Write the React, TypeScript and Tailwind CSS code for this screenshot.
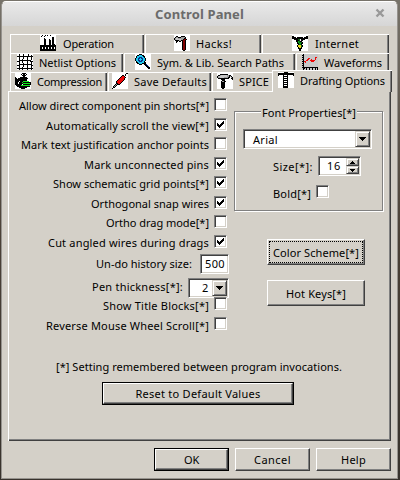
import React, { useLayoutEffect, useRef, type ReactNode } from "react";

/** A line of text whose letter spacing is adjusted so that it fills `w` pixels. */
function Fit({ w, children, className = "" }: { w: number; children: string; className?: string }) {
  const ref = useRef<HTMLSpanElement>(null);
  useLayoutEffect(() => {
    const el = ref.current;
    if (!el) return;
    el.style.letterSpacing = "0px";
    const natural = el.getBoundingClientRect().width;
    el.style.letterSpacing = `${(w - natural) / children.length}px`;
  }, [w, children]);
  return (
    <span ref={ref} className={`inline-block shrink-0 whitespace-nowrap leading-[15px] ${className}`}>
      {children}
    </span>
  );
}

const palette: Record<string, string> = {
  "#": "#000000", ".": "#ffffff", g: "#00b818", y: "#e8e020", r: "#f00808",
  d: "#800000", c: "#20c8f0", b: "#083088", s: "#a0a0a0", l: "#c8c8c8", t: "#d4d0c8",
  k: "#106018", G: "#10e818",
};

/** 16x16 pixel icon, one character for each pixel. */
function Pixels({ rows }: { rows: string[] }) {
  return (
    <svg width="16" height="16" viewBox="0 0 16 16" shapeRendering="crispEdges" className="block shrink-0">
      {rows.flatMap((row, y) =>
        [...row].map((c, x) =>
          palette[c] ? <rect key={`${x}-${y}`} x={x} y={y} width="1" height="1" fill={palette[c]} /> : null,
        ),
      )}
    </svg>
  );
}

const factory = [
  "..#..#.#..#.....", ".#..#...........", "............##..", "....#.......##..",
  "....##...#..##..", "....##...##.##..", "....##...##.##..", "....##...##.##..",
  "....##...##.##..", "....##...##.###.", "################", "################",
  "##.##.##.##.##.#", "##.##.##.##.##.#", "################", "################",
];
const hammer = [
  "................", "..##...####.....", ".#ss###ssss#....", "#sllssssss##....",
  "#slllllss#dd#...", ".####ss##dd#....", "..##.##.#dd#....", "..#.....#dd#....",
  "........#dd#....", "........#dd#....", "........#dd#....", "........#dd#....",
  "........#dd#....", "........#dd#....", "........#dd#....", ".........##.....",
];
const network = [
  "................", "##............##", "####.######.####", "################",
  "..####kk.####...", "....###k.##.....", "....##gk##......", ".....#gkkk#.....",
  ".....##gg##.....", "......#kk#......", ".....#yyyk#.....", ".....#yyyk#.....",
  "......#yy#......", "......####......", ".......##.......", ".......##.......",
];
const grid = [
  "..#...#....#....", "..#...#....#..#.", "################", "..#...#...#...#.",
  "..#...#...#...#.", "..#..#....#...#.", "..############..", "###..#....#..###",
  "..#..#....#...#.", "..#...#...#...#.", "..#############.", "###...#...#...##",
  "..#...#...#...#.", "..#..#....#...#.", "################", "..#..#....#...#.",
];
const magnifier = [
  "....###.........", "..##ccc##.......", ".#cccccc##......", ".#ccbbbcc#......",
  "#ccbbcbbcc#.....", "#ccbcccbcc#.....", "#ccbbcbbcc#.....", ".#ccbbbcc#......",
  ".##cccccc##.....", "..##ccc####.....", "....###..##b....", "..........##b...",
  "...........##b..", "............###.", ".............##.", "................",
];
const waveform = [
  "t#llllllllllllll", "##llllllllllllll", "l#llllllllllllll", "##lllllllllllrrl",
  "l#llllrrlllllrll", "##lllrrllrlllrll", "l#llrrllrrrrrlll", "##rrlllllrrrllll",
  "l#lrllllllllllll", "##llllllllllllll", "l#llllllllllllll", "##llllllllllllll",
  "l#llllllllllllll", "################", "l##l#ll#ll#ll#l#", "l#ll#ll#ll#ll#l#",
];
const clamp = [
  ".......####.....", "......#.##.#....", ".......####.....", "........##......",
  "#....#######....", "##.##########...", "############....", "############....",
  "####.###GGGGGG..", "###.###G########", "###.####GGGGGGG#", "#######.########",
  ".#####GGGGGGGGG.", "..#############.", "....########....", "......####......",
];
const pen = [
  "..............##", ".............#..", "..........##.#..", ".........#rr#...",
  "........#rrrr#..", ".......#rrrr#...", "......#rrrrr#...", ".....#rrrrr#....",
  "....#rrrrr#.....", "....#rrrr#......", "....##rr#.......", "...#s###........",
  "..#s#...........", ".#s#............", ".##.............", "#...............",
];
const mallet = [
  "................", "...########.....", ".##sllllllss##..", "#sllllllllss#s#.",
  "#ssllllssss##.s#", ".###########..##", "....####.......#", ".....###........",
  "....#ss##.......", "....####........", "....####........", "....####........",
  "....####........", "....####........", "....####........", ".....##.........",
];
const tSquare = [
  "......####......", "################", "################", "#....#...#.....#",
  ".....#####......", ".....#...#......", ".....#####......", ".....#...#......",
  ".....#####......", ".....#...#......", ".....#####......", ".....#...#......",
  ".....#####......", ".....#...#......", ".....#####......", ".....#####......",
];

function Tab({ className, iconClass, icon, textClass, w, children }: {
  className: string; iconClass: string; icon: string[]; textClass: string; w: number; children: string;
}) {
  return (
    <div className={`flex shrink-0 items-start border-t border-l border-white ${className}`}>
      <div className={iconClass}><Pixels rows={icon} /></div>
      <Fit w={w} className={textClass}>{children}</Fit>
    </div>
  );
}

const edge = "shadow-[inset_-1px_0_#404040,inset_-2px_0_#808080]";

function Check({ on = false }: { on?: boolean }) {
  return (
    <span className="block size-[13px] shrink-0 border border-t-[#808080] border-l-[#808080] border-r-white border-b-white bg-white shadow-[inset_1px_1px_#404040,inset_-1px_-1px_#d4d0c8]">
      {on && (
        <svg width="11" height="11" viewBox="0 0 11 11" shapeRendering="crispEdges" className="block">
          <path d="M2 4h1v1h1v1h1v-1h1v-1h1v-1h1v-1h1v3h-1v1h-1v1h-1v1h-1v1h-1v-1h-1v-1h-1z" fill="#000" />
        </svg>
      )}
    </span>
  );
}

function Row({ h, w, label, on, textClass }: { h: string; w: number; label: string; on?: boolean; textClass?: string }) {
  return (
    <div className={`flex items-start justify-end gap-[5px] pr-px ${h}`}>
      <Fit w={w} className={textClass}>{label}</Fit>
      <Check on={on} />
    </div>
  );
}

const sunken =
  "border border-t-[#808080] border-l-[#808080] border-r-white border-b-white bg-white shadow-[inset_1px_1px_#404040,inset_-1px_-1px_#d4d0c8]";
const raised =
  "border border-t-[#d4d0c8] border-l-[#d4d0c8] border-r-[#404040] border-b-[#404040] bg-[#d4d0c8] shadow-[inset_1px_1px_#fff,inset_-1px_-1px_#808080]";

function ArrowDown({ small = false }: { small?: boolean }) {
  return small ? (
    <svg width="5" height="3" viewBox="0 0 5 3" shapeRendering="crispEdges"><path d="M0 0h5v1h-1v1h-1v1h-1v-1h-1v-1h-1z" /></svg>
  ) : (
    <svg width="7" height="4" viewBox="0 0 7 4" shapeRendering="crispEdges"><path d="M0 0h7v1h-1v1h-1v1h-1v1h-1v-1h-1v-1h-1v-1h-1z" /></svg>
  );
}

function Button({ className, children }: { className: string; children: ReactNode }) {
  return (
    <button
      className={`flex shrink-0 items-center justify-center border border-t-white border-l-white border-r-[#404040] border-b-[#404040] bg-[#d4d0c8] shadow-[inset_-1px_-1px_#808080] ${className}`}
    >
      {children}
    </button>
  );
}

export default function App() {
  return (
    <div className="h-[480px] w-[400px] overflow-hidden bg-linear-to-b from-[#77736a] via-[#4a4036] to-[#38332d] pt-px pl-px font-['Noto_Sans','Open_Sans',sans-serif] text-[11px] text-black">
      <div className="flex h-[478px] w-[397px] flex-col overflow-hidden rounded-t-[5px] border border-[#96938e] border-t-white bg-[#d4d0c8]">
        <header className="flex h-[24px] shrink-0 items-start rounded-t-[4px] bg-linear-to-b from-[#e9e9e9] to-[#d6d6d6] pt-[5px] pl-[153px]">
          <Fit w={89} className="font-bold text-[13px] text-[#6b6b6b]">Control Panel</Fit>
          <svg width="10" height="10" viewBox="0 0 10 10" className="mt-px ml-[131px] shrink-0">
            <path d="M1.5 1.5 8.5 8.5M8.5 1.5 1.5 8.5" stroke="#999" strokeWidth="2.4" />
          </svg>
        </header>

        <nav className="mt-[8px] shrink-0 pl-[8px]">
          <div className="flex h-[19px]">
            <Tab className={`w-[134px] ${edge}`} iconClass="pl-[29px]" icon={factory} textClass="ml-[7px] mt-[1px]" w={51}>Operation</Tab>
            <Tab className={`ml-px w-[116px] ${edge}`} iconClass="pl-[28px]" icon={hammer} textClass="ml-[6px] mt-[1px]" w={36}>Hacks!</Tab>
            <Tab className={`ml-px w-[127px] ${edge}`} iconClass="pl-[29px]" icon={network} textClass="ml-[7px] mt-[1px]" w={44}>Internet</Tab>
          </div>
          <div className="flex h-[19px]">
            <Tab className={`w-[113px] ${edge}`} iconClass="pl-[6px]" icon={grid} textClass="ml-[6px] mt-[1px]" w={77}>Netlist Options</Tab>
            <Tab className={`ml-px w-[171px] ${edge}`} iconClass="pl-[10px]" icon={magnifier} textClass="ml-[6px] mt-[1px]" w={127}>Sym. & Lib. Search Paths</Tab>
            <Tab className={`ml-px w-[93px] ${edge}`} iconClass="pl-[5px]" icon={waveform} textClass="ml-[6px] mt-[1px]" w={58}>Waveforms</Tab>
          </div>
          <div className="flex h-[19px]">
            <Tab className={`w-[97px] ${edge}`} iconClass="pl-[4px]" icon={clamp} textClass="ml-[6px] mt-[1px]" w={65}>Compression</Tab>
            <Tab className={`ml-px w-[103px] ${edge}`} iconClass="pl-[3px]" icon={pen} textClass="ml-[6px] mt-[1px]" w={73}>Save Defaults</Tab>
            <Tab className="ml-px w-[60px]" iconClass="pl-[4px]" icon={mallet} textClass="ml-[6px] mt-[1px]" w={30}>SPICE</Tab>
            <Tab className={`z-10 -mt-[2px] h-[22px] w-[120px] bg-[#d4d0c8] ${edge}`} iconClass="pt-px pl-[5px]" icon={tSquare} textClass="ml-[6px] mt-[2px]" w={85}>Drafting Options</Tab>
          </div>
        </nav>

        <main className="ml-[6px] flex h-[350px] w-[383px] shrink-0 flex-col border-t border-l border-white shadow-[inset_-1px_-1px_#404040,inset_-2px_-2px_#808080]">
          <div className="flex h-[268px] shrink-0">
            <section className="w-[219px] shrink-0 pt-[6px]">
              <Row h="h-[20px]" w={190} label="Allow direct component pin shorts[*]" />
              <Row h="h-[19px]" w={163} label="Automatically scroll the view[*]" on />
              <Row h="h-[20px]" w={188} label="Mark text justification anchor points" />
              <Row h="h-[19px]" w={125} label="Mark unconnected pins" on />
              <Row h="h-[20px]" w={156} label="Show schematic grid points[*]" on />
              <Row h="h-[19px]" w={118} label="Orthogonal snap wires" on />
              <Row h="h-[20px]" w={103} label="Ortho drag mode[*]" />
              <Row h="h-[19px]" w={161} label="Cut angled wires during drags" on />
              <div className="-mr-px flex h-[24px] items-start justify-end">
                <Fit w={96} className="mt-[2px] mr-[8px]">Un-do history size:</Fit>
                <div className={`h-[20px] w-[29px] ${sunken} pt-px pl-[4px]`}><Fit w={20}>500</Fit></div>
              </div>
              <div className="-mr-px flex h-[19px] items-start justify-end">
                <Fit w={91} className="mt-px mr-[5px]">Pen thickness[*]:</Fit>
                <div className={`flex h-[20px] w-[41px] ${sunken} p-px`}>
                  <div className="w-[22px] pl-[12px]"><Fit w={7}>2</Fit></div>
                  <div className={`flex h-[16px] w-[15px] items-center justify-center ${raised}`}><ArrowDown /></div>
                </div>
              </div>
              <Row h="h-[20px]" w={106} label="Show Title Blocks[*]" textClass="mt-px" />
              <Row h="h-[20px]" w={163} label="Reverse Mouse Wheel Scroll[*]" textClass="mt-px" />
            </section>

            <section className="ml-[6px] flex w-[149px] flex-col items-start pt-[13px]">
              <fieldset className="-mt-[1px] h-[107px] w-[149px] shrink-0 border border-[#808080] shadow-[1px_1px_#fff,inset_1px_1px_#fff]">
                <legend className="ml-[26px] h-[15px] bg-[#d4d0c8] px-[1px] leading-none"><Fit w={94} className="relative top-px">Font Properties[*]</Fit></legend>
                <div className={`mt-[10px] ml-[8px] flex h-[20px] w-[129px] ${sunken} p-px`}>
                  <div className="w-[110px] pt-px pl-[8px]"><Fit w={25}>Arial</Fit></div>
                  <div className={`flex h-[16px] w-[15px] items-center justify-center ${raised}`}><ArrowDown /></div>
                </div>
                <div className="mt-[7px] ml-[38px] flex h-[20px]">
                  <Fit w={40} className="mt-[3px]">Size[*]:</Fit>
                  <div className={`ml-[5px] flex h-[20px] w-[43px] ${sunken} p-px`}>
                    <div className="w-[26px] pl-[7px]"><Fit w={14}>16</Fit></div>
                    <div className="flex w-[13px] flex-col">
                      <div className={`flex h-[8px] items-center justify-center ${raised}`}><span className="flex rotate-180"><ArrowDown small /></span></div>
                      <div className={`flex h-[8px] items-center justify-center ${raised}`}><ArrowDown small /></div>
                    </div>
                  </div>
                </div>
                <div className="mt-[9px] ml-[38px] flex">
                  <Fit w={38} className="mt-px">Bold[*]</Fit>
                  <span className="ml-[5px]"><Check /></span>
                </div>
              </fieldset>
              <Button className="mt-[28px] ml-[33px] h-[26px] w-[98px]">
                <span className="flex h-[22px] w-[94px] items-center justify-center border border-dotted border-black pt-px"><Fit w={86}>Color Scheme[*]</Fit></span>
              </Button>
              <Button className="mt-[15px] ml-[33px] h-[26px] w-[98px] pt-px"><Fit w={60}>Hot Keys[*]</Fit></Button>
            </section>
          </div>

          <p className="ml-[47px] h-[22px]"><Fit w={286} className="relative -top-px">[*] Setting remembered between program invocations.</Fit></p>
          <div className="ml-[93px] h-[23px] w-[192px] border border-black">
            <Button className="h-[21px] w-[190px]"><Fit w={125}>Reset to Default Values</Fit></Button>
          </div>
        </main>

        <footer className="mt-[7px] flex pl-[152px]">
          <div className="h-[23px] w-[75px] border border-black">
            <Button className="h-[21px] w-[73px]"><Fit w={15}>OK</Fit></Button>
          </div>
          <Button className="ml-[6px] h-[23px] w-[75px]"><Fit w={37}>Cancel</Fit></Button>
          <Button className="ml-[6px] h-[23px] w-[75px]"><Fit w={25}>Help</Fit></Button>
        </footer>
      </div>
    </div>
  );
}
